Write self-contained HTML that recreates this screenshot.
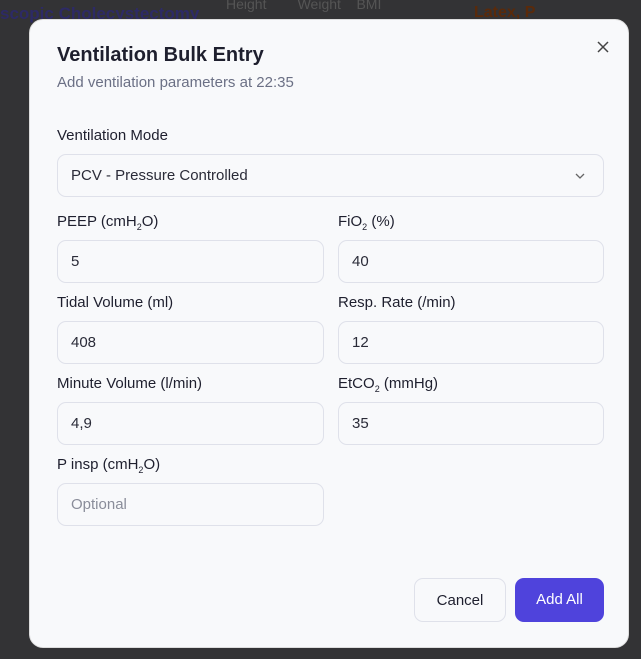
<!DOCTYPE html>
<html><head><style>
*{box-sizing:border-box;margin:0;padding:0}
body{width:641px;height:659px;overflow:hidden;background:#333335;font-family:"Liberation Sans",sans-serif;position:relative}
.bg{position:absolute;color:#555;font-size:14px}
.modal{position:absolute;left:29px;top:19px;width:600px;height:629px;background:#f8f9fb;border-radius:14px;border:1px solid #ddd}
.t{position:absolute;left:27px;top:24px;font-size:20px;font-weight:bold;color:#1e1f2e}
.s{position:absolute;left:27px;top:54px;font-size:15px;color:#6b7085}
.l{position:absolute;font-size:15px;color:#1e1f2e;font-weight:500}
.l sub{font-size:9px}
.i{position:absolute;height:43px;border:1px solid #dfe1ea;border-radius:9px;background:#f8f9fb;font-size:15px;color:#2a2b38;padding:12px 13px}
.btn{position:absolute;top:558px;height:44px;border-radius:9px;font-size:15px;padding-top:13px;text-align:center}
</style></head><body>
<div class="bg" style="left:0;top:4px;color:#2d2a66;font-size:17px;font-weight:bold">scopic Cholecystectomy</div>
<div class="bg" style="left:226px;top:-4px">Height &nbsp;&nbsp;&nbsp;&nbsp;&nbsp;&nbsp; Weight &nbsp;&nbsp; BMI</div>
<div class="bg" style="left:474px;top:4px;color:#5a2a0a;font-size:16px;font-weight:bold">Latex, P</div>
<div class="modal">
<div class="t">Ventilation Bulk Entry</div>
<div class="s">Add ventilation parameters at 22:35</div>
<svg style="position:absolute;left:567px;top:21px" width="12" height="12" viewBox="0 0 12 12"><path d="M1 1L11 11M11 1L1 11" stroke="#444" stroke-width="1.5" fill="none"/></svg>
<div class="l" style="left:27px;top:107px">Ventilation Mode</div>
<div class="i" style="left:27px;top:134px;width:547px">PCV - Pressure Controlled<svg style="position:absolute;right:18px;top:18px" width="10" height="6" viewBox="0 0 10 6"><path d="M1 1L5 5L9 1" stroke="#666" stroke-width="1.3" fill="none"/></svg></div>
<div class="l" style="left:27px;top:193px">PEEP (cmH<sub>2</sub>O)</div>
<div class="l" style="left:308px;top:193px">FiO<sub>2</sub> (%)</div>
<div class="i" style="left:27px;top:220px;width:267px">5</div>
<div class="i" style="left:308px;top:220px;width:266px">40</div>
<div class="l" style="left:27px;top:274px">Tidal Volume (ml)</div>
<div class="l" style="left:308px;top:274px">Resp. Rate (/min)</div>
<div class="i" style="left:27px;top:301px;width:267px">408</div>
<div class="i" style="left:308px;top:301px;width:266px">12</div>
<div class="l" style="left:27px;top:355px">Minute Volume (l/min)</div>
<div class="l" style="left:308px;top:355px">EtCO<sub>2</sub> (mmHg)</div>
<div class="i" style="left:27px;top:382px;width:267px">4,9</div>
<div class="i" style="left:308px;top:382px;width:266px">35</div>
<div class="l" style="left:27px;top:436px">P insp (cmH<sub>2</sub>O)</div>
<div class="i" style="left:27px;top:463px;width:267px;color:#8a8d9a">Optional</div>
<div class="btn" style="left:384px;width:92px;border:1px solid #dfe1ea;color:#1e1f2e">Cancel</div>
<div class="btn" style="left:485px;width:89px;background:#4f43dc;color:#fff">Add All</div>
</div>
</body></html>
